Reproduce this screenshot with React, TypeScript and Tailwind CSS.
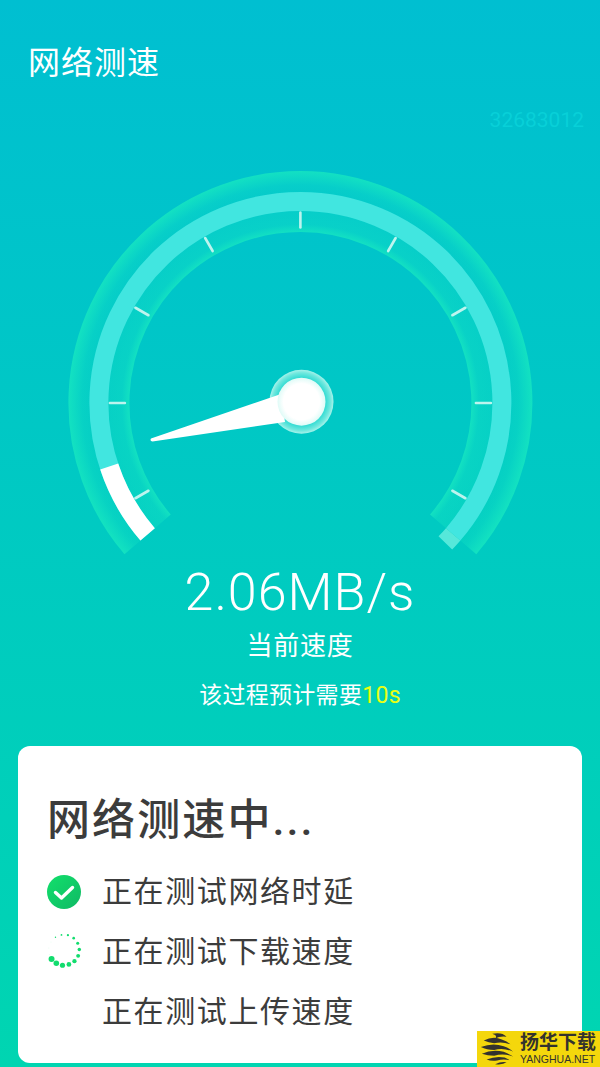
const CX = 300.4;
const CY = 403;
const HUB_X = 301.5;
const HUB_Y = 401.7;

function pt(r: number, deg: number) {
  const a = (deg * Math.PI) / 180;
  return [CX + r * Math.cos(a), CY + r * Math.sin(a)];
}

function arc(r: number, from: number, to: number) {
  const [x0, y0] = pt(r, from);
  const [x1, y1] = pt(r, to);
  const large = to - from > 180 ? 1 : 0;
  return `M${x0} ${y0}A${r} ${r} 0 ${large} 1 ${x1} ${y1}`;
}

const ticks = [150, 180, 210, 240, 270, 300, 330, 360, 30];

function Gauge() {
  return (
    <svg viewBox="0 160 600 400" className="block h-[400px] w-[600px]">
      <defs>
        <radialGradient id="band" gradientUnits="userSpaceOnUse" cx={CX} cy={CY} r="232">
          <stop offset="0.735" stop-color="#18e8c0" stop-opacity="0.8" />
          <stop offset="0.77" stop-color="#18e8c4" stop-opacity="0.35" />
          <stop offset="0.9" stop-color="#18e8c4" stop-opacity="0.2" />
          <stop offset="0.94" stop-color="#18e8c4" stop-opacity="0.3" />
          <stop offset="1" stop-color="#18e8c0" stop-opacity="0.8" />
        </radialGradient>
        <radialGradient id="glow" gradientUnits="userSpaceOnUse" cx={HUB_X} cy={HUB_Y} r="32">
          <stop offset="0.7" stop-color="#22d8d0" />
          <stop offset="0.9" stop-color="#6ee8de" />
          <stop offset="1" stop-color="#a8f2ea" />
        </radialGradient>
        <radialGradient id="hub" gradientUnits="userSpaceOnUse" cx={HUB_X} cy={HUB_Y} r="24">
          <stop offset="0.75" stop-color="#ffffff" />
          <stop offset="1" stop-color="#dffbf7" />
        </radialGradient>
      </defs>
      <path d={arc(201.5, 139.3, 400.7)} fill="none" stroke="url(#band)" strokeWidth="61" />
      <path d={arc(201.5, 139.3, 400.7)} fill="none" stroke="#41e6e0" strokeWidth="19" />
      <path d={arc(201.5, 40.7, 44)} fill="none" stroke="#56e8da" strokeWidth="19" />
      <path d={arc(201.5, 139.3, 161.6)} fill="none" stroke="#ffffff" strokeWidth="19" />
      {ticks.map((t) => {
        const [x0, y0] = pt(190.5, t);
        const [x1, y1] = pt(175.5, t);
        return <line key={t} x1={x0} y1={y0} x2={x1} y2={y1} stroke="#bdf4ee" strokeWidth="2.600" strokeLinecap="round" />;
      })}
      <circle cx={HUB_X} cy={HUB_Y} r="32" fill="url(#glow)" />
      <path d="M151 438.600L281 394L285 422L152.500 441.500Q149.500 441 151 438.600Z" fill="#ffffff" />
      <circle cx={HUB_X} cy={HUB_Y} r="24" fill="url(#hub)" />
    </svg>
  );
}

function CheckIcon() {
  return (
    <svg viewBox="0 0 34 34" className="h-[34px] w-[34px]">
      <defs>
        <linearGradient id="ok" x1="0" y1="0" x2="1" y2="1">
          <stop offset="0" stop-color="#12e06c" />
          <stop offset="1" stop-color="#0fb964" />
        </linearGradient>
      </defs>
      <circle cx="17" cy="17" r="17" fill="url(#ok)" />
      <path d="M8.500 17.500L14.500 23L25.500 12.500" fill="none" stroke="#ffffff" strokeWidth="3.400" strokeLinecap="round" strokeLinejoin="round" />
    </svg>
  );
}

function Spinner() {
  const dots = Array.from({ length: 15 }, (_, i) => i);
  return (
    <svg viewBox="0 0 36 36" className="h-[36px] w-[36px] -translate-y-[2px]">
      {dots.map((i) => {
        const a = ((144.5 - i * 24.4) * Math.PI) / 180;
        return (
          <circle
            key={i}
            cx={18 + 15.3 * Math.cos(a)}
            cy={18 + 15.3 * Math.sin(a)}
            r={Math.max(0.5, 3 - i * 0.21)}
            fill="#12dc6e"
            opacity={i > 11 ? 0.12 : 1}
          />
        );
      })}
    </svg>
  );
}

function Row({ icon, text }: { icon?: React.ReactNode; text: string }) {
  return (
    <div className="flex h-[60px] items-center">
      <div className="flex w-[36px] items-center justify-center">{icon}</div>
      <span className="ml-[20px] text-[30px] leading-none tracking-[1.600px] text-[#3c3c3c]">{text}</span>
    </div>
  );
}

function Watermark() {
  return (
    <div className="absolute bottom-0 right-0 flex h-[36px] w-[123px] items-center bg-[#f4d70c]">
      <svg viewBox="0 0 40 34" className="ml-[2px] h-[34px] w-[38px] shrink-0">
        <g fill="#33322e">
          <path d="M14 1Q24 -1 29 4Q22 3 17 6Q20 3 14 1Z" />
          <path d="M5 8Q15 3 24 7Q30 9 33 12Q24 9 16 11Q10 10 5 8Z" />
          <path d="M2 15Q14 10 26 14Q32 16 36 20Q26 15 16 18Q8 18 2 15Z" />
          <path d="M3 22Q14 17 26 20Q33 23 36 25Q26 21 16 24Q9 24 3 22Z" />
          <path d="M8 28Q18 24 27 26Q31 28 33 29Q26 27 19 29Q13 30 8 28Z" />
          <path d="M17 33Q23 30 29 31Q25 34 17 33Z" />
        </g>
      </svg>
      <div className="ml-[3px] flex flex-col">
        <span className="text-[19px] font-bold leading-[20px] text-[#33322e]">扬华下载</span>
        <span className="font-['Liberation_Sans',sans-serif] text-[10.500px] leading-[12px] text-[#33322e]">YANGHUA.NET</span>
      </div>
    </div>
  );
}

export default function App() {
  return (
    <div className="relative h-[1067px] w-[600px] overflow-hidden bg-gradient-to-b from-[#00bfd1] to-[#00d5b1] font-['Roboto','Noto_Sans_CJK_SC',sans-serif]">
      {/* Title */}
      <div className="px-[28px] pt-[43px]">
        <h1 className="text-[32px] font-normal leading-[40px] tracking-[1px] text-white">网络测速</h1>
        <div className="mr-[-12px] mt-[25px] text-right text-[21px] leading-[24px] text-[#08d0d8]">32683012</div>
      </div>

      {/* Gauge */}
      <div className="mt-[28px]">
        <Gauge />
      </div>

      {/* Speed */}
      <div className="text-center text-white">
        <div className="text-[52px] font-light leading-[66px] tracking-[1px]">2.06MB/s</div>
        <div className="mt-[2px] text-[26px] leading-[36px] tracking-[0.700px]">当前速度</div>
        <div className="mt-[16px] text-[23px] leading-[32px] tracking-[0.300px]">
          该过程预计需要<span className="text-[#eaff12]">10s</span>
        </div>
      </div>

      {/* Status card */}
      <div className="absolute bottom-[4px] left-[18px] right-[18px] h-[317px] rounded-xl bg-white pl-[28px] pt-[48px]">
        <h2 className="ml-[1px] text-[43px] font-medium leading-[52px] tracking-[2.100px] text-[#3c3c3c]">网络测速中...</h2>
        <div className="mt-[16px]">
          <Row icon={<CheckIcon />} text="正在测试网络时延" />
          <Row icon={<Spinner />} text="正在测试下载速度" />
          <Row text="正在测试上传速度" />
        </div>
      </div>

      <Watermark />
    </div>
  );
}
